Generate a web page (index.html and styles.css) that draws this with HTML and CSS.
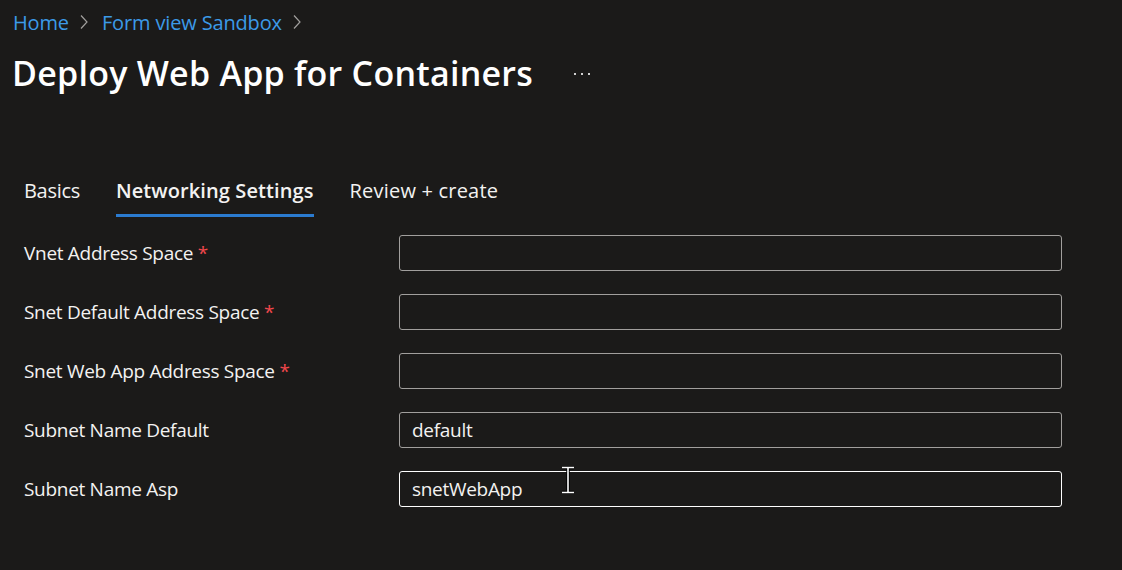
FILE: index.html
```html
<!DOCTYPE html>
<html lang="en">
<head>
<meta charset="utf-8">
<title>Deploy Web App for Containers</title>
<link rel="stylesheet" href="styles.css">
</head>
<body>
<div class="page">
  <nav class="breadcrumb">
    <a class="crumb" href="#">Home</a>
    <svg class="chev" width="8" height="16" viewBox="0 0 8 16"><path d="M1 1.5 L7 8 L1 14.5" fill="none" stroke="#a19f9d" stroke-width="1.2"/></svg>
    <a class="crumb" href="#">Form view Sandbox</a>
    <svg class="chev" width="8" height="16" viewBox="0 0 8 16"><path d="M1 1.5 L7 8 L1 14.5" fill="none" stroke="#a19f9d" stroke-width="1.2"/></svg>
  </nav>
  <header class="title-row">
    <h1 class="title">Deploy Web App for Containers</h1>
    <span class="more"><i></i><i></i><i></i></span>
  </header>
  <div class="tabs">
    <div class="tab tab-basics">Basics</div>
    <div class="tab active">Networking Settings</div>
    <div class="tab">Review + create</div>
  </div>
  <form class="form">
    <div class="row">
      <label class="label">Vnet Address Space <span class="req">*</span></label>
      <div class="field"></div>
    </div>
    <div class="row">
      <label class="label">Snet Default Address Space <span class="req">*</span></label>
      <div class="field"></div>
    </div>
    <div class="row">
      <label class="label">Snet Web App Address Space <span class="req">*</span></label>
      <div class="field"></div>
    </div>
    <div class="row">
      <label class="label">Subnet Name Default</label>
      <div class="field">default</div>
    </div>
    <div class="row">
      <label class="label">Subnet Name Asp</label>
      <div class="field focused">snetWebApp
        <svg class="ibeam" width="14" height="28" viewBox="0 0 14 28"><path d="M1 1.5 H13 M7 1.5 V26.5 M1 26.5 H13" stroke="#000" stroke-width="3.5" fill="none"/><path d="M1 1.5 H13 M7 1.5 V26.5 M1 26.5 H13" stroke="#fff" stroke-width="1.6" fill="none"/></svg>
      </div>
    </div>
  </form>
</div>
</body>
</html>
```
FILE: styles.css
```css
html, body {
  margin: 0;
  padding: 0;
  background: #1b1a19;
}
body {
  font-family: "Open Sans", "Noto Sans", "Liberation Sans", sans-serif;
  color: #ffffff;
  width: 1122px;
  height: 570px;
  overflow: hidden;
}
.page {
  padding: 8px 0 0 0;
}
.breadcrumb {
  display: flex;
  align-items: center;
  padding-left: 13px;
  height: 28px;
  font-size: 20px;
}
.crumb {
  color: #3c9ae8;
  text-decoration: none;
  letter-spacing: -0.15px;
}
.chev {
  display: block;
  margin: 0 14px 0 11px;
}
.title-row {
  display: flex;
  align-items: center;
  padding-left: 12px;
  margin-top: 15px;
  height: 44px;
}
.title {
  margin: 0;
  font-size: 34px;
  font-weight: 600;
  line-height: 44px;
  letter-spacing: 0.25px;
}
.more {
  display: flex;
  gap: 5px;
  margin-left: 41px;
  margin-top: 2px;
}
.more i {
  display: block;
  width: 2px;
  height: 2px;
  background: #d0d0d0;
}
.tabs {
  display: flex;
  gap: 36px;
  padding-left: 24px;
  margin-top: 82px;
}
.tab {
  font-size: 20px;
  line-height: 28px;
  padding-bottom: 9px;
  border-bottom: 3px solid transparent;
  color: #f3f2f1;
  letter-spacing: 0.2px;
}
.tab-basics {
  letter-spacing: -0.3px;
}
.tab.active {
  font-weight: 600;
  letter-spacing: 0.1px;
  border-bottom-color: #2b7bd0;
}
.form {
  display: flex;
  flex-direction: column;
  gap: 23px;
  margin-top: 18px;
  padding-left: 24px;
}
.row {
  display: flex;
  align-items: center;
  height: 36px;
}
.label {
  width: 375px;
  font-size: 19px;
  color: #f3f2f1;
  letter-spacing: -0.3px;
}
.req {
  color: #f1474c;
}
.field {
  position: relative;
  box-sizing: border-box;
  width: 663px;
  height: 36px;
  border: 1px solid #a19f9d;
  border-radius: 3px;
  padding: 0 12px;
  font-size: 19px;
  line-height: 34px;
  color: #f3f2f1;
  letter-spacing: -0.3px;
}
.field.focused {
  border-color: #ffffff;
}
.ibeam {
  position: absolute;
  left: 161px;
  top: -6px;
}
```
